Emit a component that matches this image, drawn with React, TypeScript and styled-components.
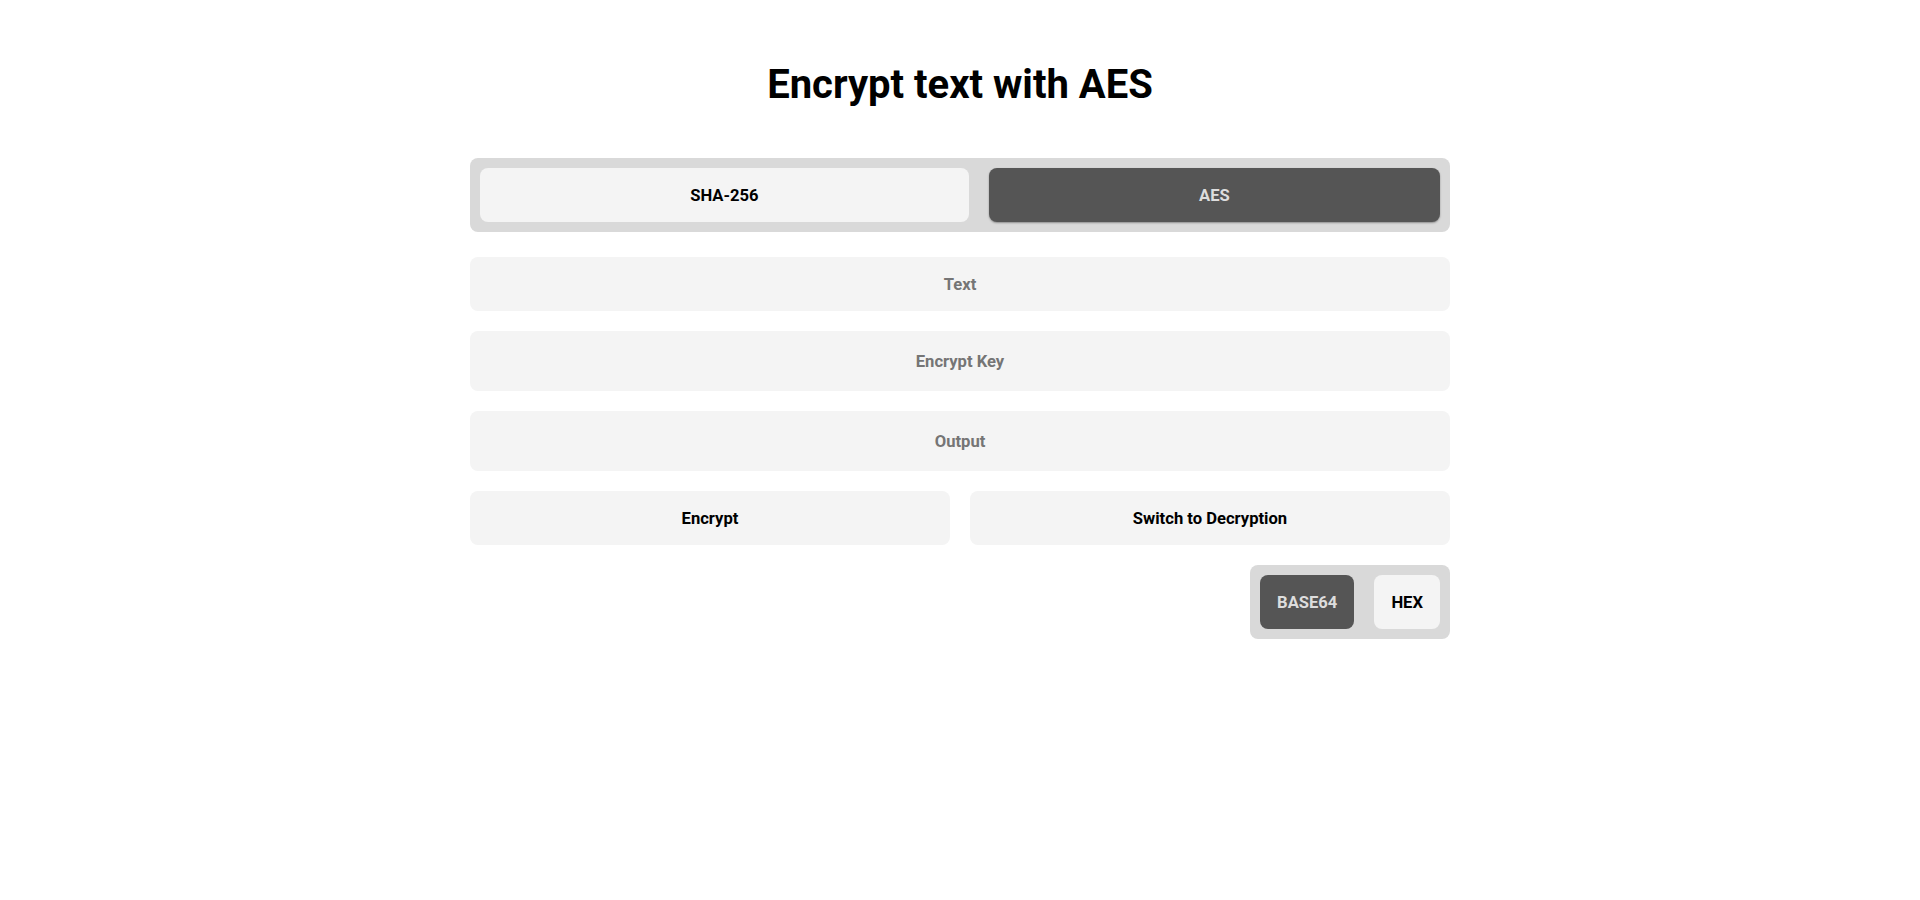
import { useState } from "react";
import styled, { createGlobalStyle } from "styled-components";

type Algo = "SHA-256" | "AES";
type Format = "BASE64" | "HEX";

const App = (): JSX.Element => {
  const [algo, setAlgo] = useState<Algo>("AES");
  const [format, setFormat] = useState<Format>("BASE64");

  return (
    <>
      <GlobalStyle />
      <Page>
        <Title>Encrypt text with {algo}</Title>
        <Panel>
          <TabGroup role="tablist">
            {(["SHA-256", "AES"] as Algo[]).map((name) => (
              <TabButton
                key={name}
                $active={algo === name}
                onClick={() => setAlgo(name)}>
                {name}
              </TabButton>
            ))}
          </TabGroup>

          <Field placeholder="Text" $height={54} />
          <Field placeholder="Encrypt Key" $height={60} />
          <Field placeholder="Output" $height={60} readOnly />

          <ActionRow>
            <ActionButton>Encrypt</ActionButton>
            <ActionButton>Switch to Decryption</ActionButton>
          </ActionRow>

          <FormatToggle>
            {(["BASE64", "HEX"] as Format[]).map((f) => (
              <FormatButton
                key={f}
                $active={format === f}
                onClick={() => setFormat(f)}>
                {f}
              </FormatButton>
            ))}
          </FormatToggle>
        </Panel>
      </Page>
    </>
  );
};

export default App;

const GlobalStyle = createGlobalStyle`
  body {
    margin: 0;
    background: #ffffff;
    font-family: Roboto, "Liberation Sans", Arial, sans-serif;
  }

  * {
    box-sizing: border-box;
  }
`;

const Page = styled.main`
  display: flex;
  flex-direction: column;
  align-items: center;
  padding-top: 61px;
`;

const Title = styled.h1`
  margin: 0 0 50px;
  font-size: 40px;
  line-height: 47px;
  font-weight: 700;
  color: #000;
`;

const Panel = styled.div`
  width: 980px;
  display: flex;
  flex-direction: column;
  gap: 20px;
`;

const TabGroup = styled.div`
  display: flex;
  gap: 20px;
  padding: 10px;
  margin-bottom: 5px;
  background: #d9d9d9;
  border-radius: 8px;
`;

const baseButton = `
  height: 54px;
  border: none;
  border-radius: 8px;
  font-family: Roboto, "Liberation Sans", Arial, sans-serif;
  font-size: 16.6px;
  font-weight: 700;
  cursor: pointer;
`;

const TabButton = styled.button<{ $active?: boolean }>`
  ${baseButton}
  flex: 1 1 auto;
  padding: 0 16px;
  background: ${(p) => (p.$active ? "#555555" : "#f4f4f4")};
  color: ${(p) => (p.$active ? "#dddddd" : "#000000")};
  box-shadow: ${(p) => (p.$active ? "0 1px 2px rgba(0, 0, 0, 0.35)" : "none")};
`;

const Field = styled.input<{ $height: number }>`
  width: 100%;
  height: ${(p) => p.$height}px;
  border: none;
  border-radius: 8px;
  background: #f4f4f4;
  text-align: center;
  font-family: Roboto, "Liberation Sans", Arial, sans-serif;
  font-size: 16.6px;
  font-weight: 700;
  color: #000;
  outline: none;

  &::placeholder {
    color: #757575;
  }
`;

const ActionRow = styled.div`
  display: grid;
  grid-template-columns: 1fr 1fr;
  gap: 20px;
`;

const ActionButton = styled.button`
  ${baseButton}
  background: #f4f4f4;
  color: #000;
`;

const FormatToggle = styled.div`
  align-self: flex-end;
  display: flex;
  gap: 20px;
  padding: 10px;
  background: #d9d9d9;
  border-radius: 8px;
`;

const FormatButton = styled.button<{ $active?: boolean }>`
  ${baseButton}
  padding: 0 17px;
  background: ${(p) => (p.$active ? "#555555" : "#f4f4f4")};
  color: ${(p) => (p.$active ? "#dddddd" : "#000000")};
`;
